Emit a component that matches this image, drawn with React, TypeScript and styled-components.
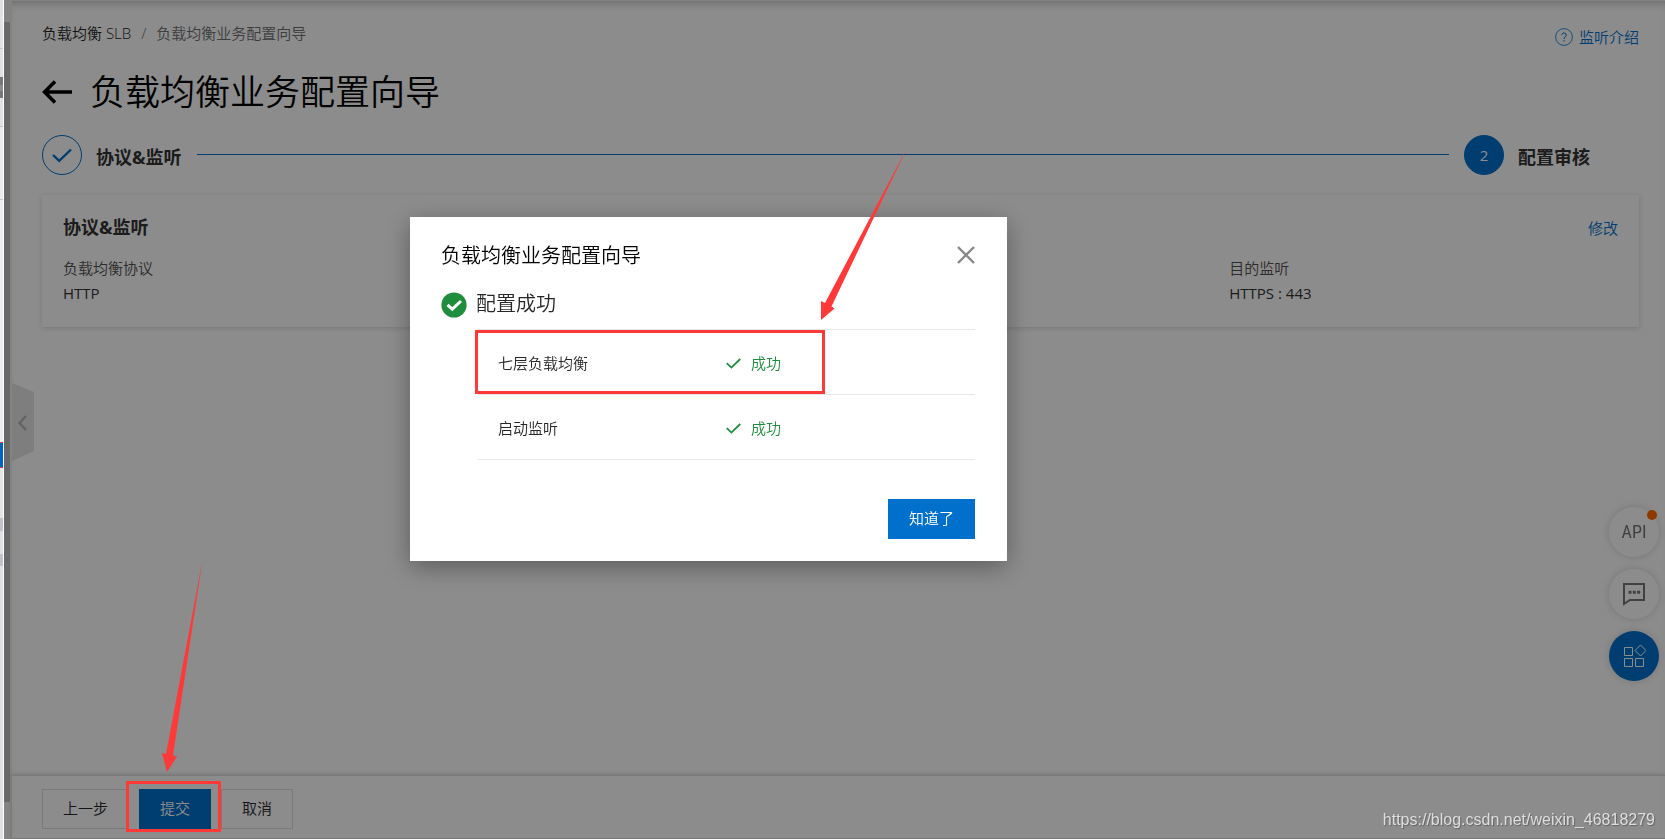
import React from 'react';
import styled, { createGlobalStyle, css } from 'styled-components';

const BLUE = '#0070cc';
const GREEN = '#1e8e3e';
const RED = '#ff3838';

const GlobalStyle = createGlobalStyle`
  * { box-sizing: border-box; }
  body {
    margin: 0;
    background: #fff;
    color: #262626;
    font-family: "Open Sans", "Noto Sans CJK SC", sans-serif;
    font-weight: 350;
    font-size: 15px;
    line-height: 24px;
  }
  h1, h2, h3, p, dl, dd, ol { margin: 0; padding: 0; font-weight: 350; }
  button { font: inherit; cursor: pointer; }
  a { color: ${BLUE}; text-decoration: none; }
`;

const Shell = styled.div`
  display: flex;
  min-height: 100vh;
`;

const Sliver = styled.div`
  flex: 0 0 4px;
  overflow: hidden;
  background: #e0e1e5;
  border-right: 1px solid #fff;
`;

const SliverPart = styled.div<{ $h: number; $bg?: string; $line?: string }>`
  height: ${p => p.$h}px;
  background: ${p => p.$bg || 'transparent'};
  border-bottom: 1px solid ${p => p.$line || 'transparent'};
`;

const ScrollTrack = styled.div`
  flex: 0 0 8px;
  display: flex;
  flex-direction: column;
  background: #eee;
  padding: 22px 2px 37px 0;
`;

const ScrollThumb = styled.div`
  flex: 1;
  background: #bdbdbd;
`;

const Main = styled.main`
  position: relative;
  flex: 1;
  min-width: 0;
  display: flex;
  flex-direction: column;
  box-shadow: inset 0 8px 8px -6px rgba(0, 0, 0, 0.25);
  border-top: 1px solid #eee;
`;

const Content = styled.div`
  flex: 1;
  padding: 20px 26px 24px 30px;
`;

const TopRow = styled.div`
  display: flex;
  justify-content: space-between;
  align-items: flex-start;
`;

const Crumbs = styled.ol`
  display: flex;
  list-style: none;
  gap: 10px;
  color: #707070;
  a { color: #262626; }
`;

const HelpLink = styled.a`
  display: flex;
  align-items: center;
  gap: 6px;
  padding-top: 4px;
`;

const TitleRow = styled.div`
  display: flex;
  align-items: center;
  gap: 18px;
  margin-top: 19px;
`;

const BackButton = styled.button`
  display: flex;
  padding: 0;
  border: 0;
  background: none;
  color: #000;
`;

const PageTitle = styled.h1`
  color: #000;
  font-size: 35px;
  line-height: 48px;
`;

const Steps = styled.ol`
  display: flex;
  align-items: center;
  list-style: none;
  margin-top: 19px;
  padding-right: 49px;
`;

const Step = styled.li`
  display: flex;
  align-items: center;
  gap: 14px;
`;

const StepMark = styled.span<{ $active?: boolean }>`
  display: flex;
  align-items: center;
  justify-content: center;
  width: 40px;
  height: 40px;
  border: 1px solid ${BLUE};
  border-radius: 50%;
  font-weight: 400;
  color: ${p => (p.$active ? '#fff' : BLUE)};
  background: ${p => (p.$active ? BLUE : 'transparent')};
`;

const StepLabel = styled.span`
  padding-top: 4px;
  color: #333;
  font-size: 18px;
  font-weight: 700;
`;

const StepLine = styled.li`
  flex: 1;
  height: 1px;
  margin: 0 15px 2px;
  background: ${BLUE};
`;

const Card = styled.section`
  margin-top: 20px;
  padding: 18px 21px 20px;
  box-shadow: 0 1px 5px rgba(0, 0, 0, 0.16);
`;

const CardHead = styled.div`
  display: flex;
  justify-content: space-between;
  align-items: center;
  h2 { color: #333; font-size: 18px; font-weight: 700; }
  a { padding-top: 3px; }
`;

const Fields = styled.dl`
  display: grid;
  grid-template-columns: repeat(4, 1fr);
  margin-top: 16px;
  padding-bottom: 1px;
`;

const Field = styled.div<{ $col: number }>`
  grid-column: ${p => p.$col};
  line-height: 25px;
  dt { color: #505050; }
  dd { color: #333; font-weight: 400; }
`;

const Footer = styled.footer`
  display: flex;
  gap: 10px;
  padding: 13px 30px 9px;
  border-top: 1px solid #dcdcdc;
  border-bottom: 1px solid #dcdcdc;
  box-shadow: 0 -1px 4px rgba(0, 0, 0, 0.16);
`;

const Marked = styled.div`
  position: relative;
`;

const Button = styled.button<{ $primary?: boolean }>`
  height: 40px;
  padding: 0 20px 2px;
  border: 1px solid #dedede;
  background: transparent;
  color: #262626;
  ${p => p.$primary && css`
    border-color: ${BLUE};
    background: ${BLUE};
    color: #fff;
  `}
`;

const Collapse = styled.button`
  position: absolute;
  left: 0;
  top: 382px;
  display: flex;
  padding: 0;
  border: 0;
  background: none;
`;

const Tools = styled.nav`
  position: fixed;
  right: 6px;
  bottom: 158px;
  display: grid;
  gap: 12px;
`;

const Tool = styled.button<{ $primary?: boolean }>`
  position: relative;
  display: flex;
  align-items: center;
  justify-content: center;
  width: 50px;
  height: 50px;
  padding: 0;
  border: 0;
  border-radius: 50%;
  color: ${p => (p.$primary ? '#fff' : '#777')};
  background: ${p => (p.$primary ? BLUE : '#fff')};
  box-shadow: 0 0 8px rgba(0, 0, 0, 0.16);
`;

const ApiLabel = styled.span`
  font-family: "Roboto Condensed", "Liberation Sans Narrow", "Liberation Mono", monospace;
  font-size: 18px;
  font-weight: 400;
`;

const Dot = styled.span`
  position: absolute;
  top: 3px;
  right: 2px;
  width: 10px;
  height: 10px;
  border-radius: 50%;
  background: #ff6a00;
`;

const Backdrop = styled.div`
  position: fixed;
  inset: 0 0 0 4px;
  z-index: 10;
  display: flex;
  justify-content: center;
  align-items: flex-start;
  padding: 217px 252px 0 0;
  background: rgba(0, 0, 0, 0.45);
`;

const Dialog = styled.section`
  position: relative;
  width: 597px;
  padding: 22px 32px 22px 31px;
  background: #fff;
  box-shadow: 0 6px 24px rgba(0, 0, 0, 0.35);
`;

const DialogHead = styled.header`
  display: flex;
  justify-content: space-between;
  align-items: center;
  h2 { padding-top: 1px; color: #000; font-size: 20px; line-height: 31px; }
`;

const CloseButton = styled.button`
  display: flex;
  padding: 0;
  border: 0;
  background: none;
  color: #888;
`;

const Result = styled.div`
  display: flex;
  align-items: center;
  gap: 9px;
  margin-top: 18px;
  h3 { padding-bottom: 1px; font-size: 20px; line-height: 30px; }
`;

const TableWrap = styled.div`
  position: relative;
  margin: 9px 0 0 37px;
`;

const Table = styled.table`
  width: 100%;
  border-collapse: collapse;
  border-top: 1px solid #e8e8e8;
  th, td {
    height: 65px;
    padding: 1px 20px 0;
    border-bottom: 1px solid #e8e8e8;
    text-align: left;
    font-weight: 350;
  }
  th { width: 228px; }
`;

const Status = styled.span`
  display: flex;
  align-items: center;
  gap: 10px;
  color: ${GREEN};
  svg { margin-top: 2px; }
`;

const DialogFoot = styled.div`
  display: flex;
  justify-content: flex-end;
  margin-top: 39px;
`;

const Highlight = styled.span<{ $inset: string }>`
  position: absolute;
  inset: ${p => p.$inset};
  z-index: 20;
  border: 3px solid ${RED};
  pointer-events: none;
`;

const Arrow = styled.svg<{ $left: number; $bottom: number }>`
  position: absolute;
  left: ${p => p.$left}px;
  bottom: ${p => p.$bottom}px;
  z-index: 20;
  fill: ${RED};
  pointer-events: none;
`;

const Watermark = styled.a`
  position: fixed;
  right: 10px;
  bottom: 8px;
  z-index: 20;
  color: #dedede;
  font-family: "Liberation Sans", sans-serif;
  font-size: 16px;
  font-weight: 400;
  line-height: 22px;
  text-shadow: 1px 1px 1px rgba(0, 0, 0, 0.3);
`;

const Tick = ({ width, height, stroke }: { width: number; height: number; stroke: number }) => (
  <svg width={width} height={height} viewBox="0 0 20 14" fill="none" stroke="currentColor" strokeWidth={stroke} aria-hidden="true">
    <path d="M1 6.5 7.2 12.4 19 1" />
  </svg>
);

const tasks = ['七层负载均衡', '启动监听'];

export default function App() {
  return (
    <>
      <GlobalStyle />
      <Shell>
        <Sliver aria-hidden="true">
          <SliverPart $h={49} $line="#c4c5c9" />
          <SliverPart $h={28} />
          <SliverPart $h={8} $bg="#77787c" />
          <SliverPart $h={6} $bg="#8b8c90" />
          <SliverPart $h={7} $bg="#77787c" />
          <SliverPart $h={29} $line="#c4c5c9" />
          <SliverPart $h={73} $bg="#e9eaee" $line="#c4c5c9" />
          <SliverPart $h={243} $bg="#eceef1" $line="#d04050" />
          <SliverPart $h={25} $bg="#0064c0" $line="#d04050" />
          <SliverPart $h={50} $bg="#e4e6e4" />
          <SliverPart $h={14} $line="#e0e1e5" $bg="#c3c2c8" />
          <SliverPart $h={22} />
          <SliverPart $h={12} $bg="#c3c2c8" />
        </Sliver>
        <ScrollTrack aria-hidden="true"><ScrollThumb /></ScrollTrack>
        <Main>
          <Content>
            <TopRow>
              <Crumbs>
                <li><a href="#slb">负载均衡 SLB</a></li>
                <li aria-hidden="true">/</li>
                <li>负载均衡业务配置向导</li>
              </Crumbs>
              <HelpLink href="#intro">
                <svg width="18" height="18" viewBox="0 0 18 18" fill="none" stroke="currentColor" aria-hidden="true">
                  <circle cx="9" cy="9" r="8.4" strokeWidth="0.8" />
                  <path d="M6.8 7.2a2.2 2.2 0 1 1 3.4 1.8c-.8.5-1.2.9-1.2 2M9 12v1.4" />
                </svg>
                监听介绍
              </HelpLink>
            </TopRow>
            <TitleRow>
              <BackButton aria-label="返回">
                <svg width="30" height="24" viewBox="0 0 30 24" fill="none" stroke="currentColor" strokeWidth="3.6" aria-hidden="true">
                  <path d="M13 1.5 2.6 12 13 22.5M3 12h27" />
                </svg>
              </BackButton>
              <PageTitle>负载均衡业务配置向导</PageTitle>
            </TitleRow>
            <Steps>
              <Step>
                <StepMark><Tick width={20} height={15} stroke={2.4} /></StepMark>
                <StepLabel>协议&amp;监听</StepLabel>
              </Step>
              <StepLine aria-hidden="true" />
              <Step>
                <StepMark $active>2</StepMark>
                <StepLabel>配置审核</StepLabel>
              </Step>
            </Steps>
            <Card>
              <CardHead>
                <h2>协议&amp;监听</h2>
                <a href="#edit">修改</a>
              </CardHead>
              <Fields>
                <Field $col={1}><dt>负载均衡协议</dt><dd>HTTP</dd></Field>
                <Field $col={4}><dt>目的监听</dt><dd>HTTPS : 443</dd></Field>
              </Fields>
            </Card>
          </Content>
          <Footer>
            <Button>上一步</Button>
            <Marked>
              <Button $primary>提交</Button>
              <Highlight $inset="-8px -10px -3px -13px" />
              <Arrow $left={22} $bottom={56} width="44" height="214" viewBox="161 559 44 214" aria-hidden="true">
                <path d="M202.500 560 173 755.500 177 756.500 167 772 162 753 166 754Z" />
              </Arrow>
            </Marked>
            <Button>取消</Button>
          </Footer>
          <Collapse aria-label="收起">
            <svg width="22" height="78" viewBox="0 0 22 78" aria-hidden="true">
              <path d="M0 0 22 9V68L0 78Z" fill="#e6e6e6" />
              <path d="M14 33 7.500 40 14 47" fill="none" stroke="#b4b4b4" strokeWidth="2.4" />
            </svg>
          </Collapse>
        </Main>
      </Shell>
      <Tools aria-label="快捷工具">
        <Tool><ApiLabel>API</ApiLabel><Dot /></Tool>
        <Tool aria-label="反馈">
          <svg width="24" height="24" viewBox="0 0 24 24" fill="none" stroke="currentColor" strokeWidth="2" aria-hidden="true">
            <path d="M2 2H22V18H8L2 22Z" />
            <path d="M6.500 10.200h3M10.800 10.200h3M15.100 10.200h3" strokeWidth="3" />
          </svg>
        </Tool>
        <Tool $primary aria-label="更多">
          <svg width="24" height="24" viewBox="0 0 24 24" fill="none" stroke="currentColor" aria-hidden="true">
            <path d="M2.500 3.500h8v8h-8zM2.500 14.500h8v8h-8zM13.500 14.500h8v8h-8zM18.500 1 24 6.500 18.500 12 13 6.500Z" />
          </svg>
        </Tool>
      </Tools>
      <Backdrop>
        <Dialog role="dialog" aria-labelledby="dialog-title">
          <DialogHead>
            <h2 id="dialog-title">负载均衡业务配置向导</h2>
            <CloseButton aria-label="关闭">
              <svg width="18" height="18" viewBox="0 0 18 18" stroke="currentColor" strokeWidth="2.400" aria-hidden="true">
                <path d="M1 1 17 17M17 1 1 17" />
              </svg>
            </CloseButton>
          </DialogHead>
          <Result>
            <svg width="26" height="26" viewBox="0 0 26 26" fill="none" aria-hidden="true">
              <circle cx="13" cy="13" r="12.600" fill={GREEN} />
              <path d="M6.500 12.800 11.300 17.200 20 9" stroke="#fff" strokeWidth="3" />
            </svg>
            <h3>配置成功</h3>
          </Result>
          <TableWrap>
            <Table>
              <tbody>
                {tasks.map(name => (
                  <tr key={name}>
                    <th scope="row">{name}</th>
                    <td><Status><Tick width={15} height={11} stroke={2.4} />成功</Status></td>
                  </tr>
                ))}
              </tbody>
            </Table>
            <Highlight $inset="1px 150px 66px -3px" />
            <Arrow $left={342} $bottom={139} width="88" height="174" viewBox="820 147 88 174" aria-hidden="true">
              <path d="M907 148 831.500 306.500 834.500 308.500 821 320V301L825 303Z" />
            </Arrow>
          </TableWrap>
          <DialogFoot><Button $primary>知道了</Button></DialogFoot>
        </Dialog>
      </Backdrop>
      <Watermark href="https://blog.csdn.net/weixin_46818279">https://blog.csdn.net/weixin_46818279</Watermark>
    </>
  );
}
